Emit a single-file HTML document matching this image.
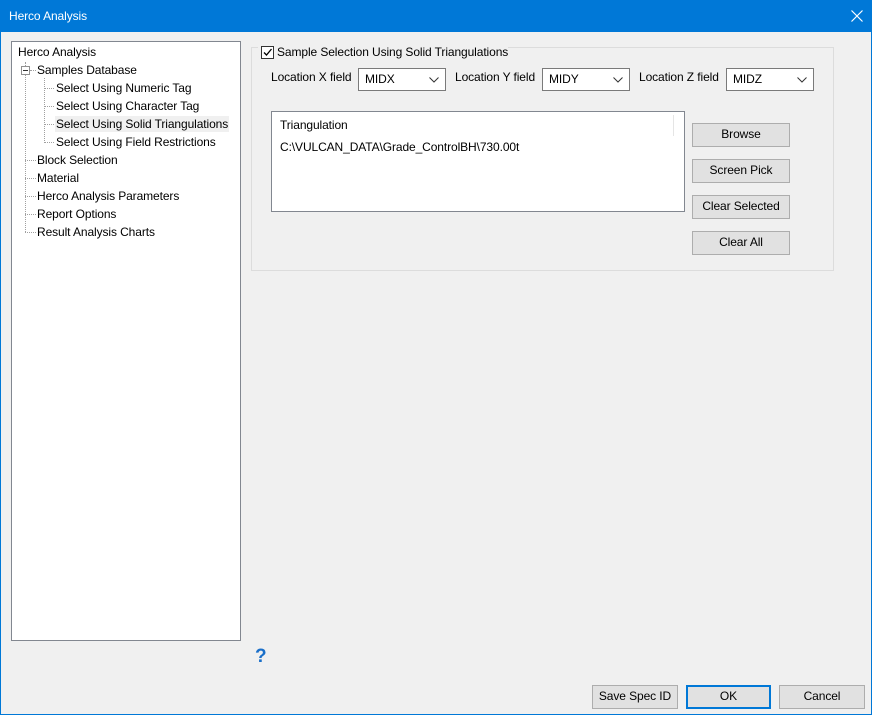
<!DOCTYPE html>
<html><head><style>
*{margin:0;padding:0;box-sizing:border-box}
body{width:872px;height:715px;background:#f0f0f0;font:12px "Liberation Sans",sans-serif;color:#000;position:relative;overflow:hidden;border:1px solid #0078d7;letter-spacing:-0.1px}
.a{position:absolute;white-space:nowrap}
.title{left:0;top:0;width:870px;height:31px;background:#0078d7;color:#fff;font-size:12px;line-height:31px;padding-left:8px}
.tree{left:10px;top:40px;width:230px;height:600px;background:#fff;border:1px solid #828790}
.ti{position:absolute;line-height:16px}
.dv{position:absolute;border-left:1px dotted #a0a0a0;width:0}
.dh{position:absolute;border-top:1px dotted #a0a0a0;height:0}
.cb{background:#fff;border:1px solid #7a7a7a;height:23px;width:88px;padding:3px 6px;line-height:14px}
.cb svg{position:absolute;right:6px;top:8px}
.btn{background:#e1e1e1;border:1px solid #adadad;height:24px;text-align:center;line-height:21px}
</style></head><body>
<div class="a title">Herco Analysis</div>
<svg class="a" style="left:850px;top:9px" width="12" height="12"><path d="M0.5 0.5L11.5 11.5M11.5 0.5L0.5 11.5" stroke="#fff" stroke-width="1.2"/></svg>
<div class="a tree">
 <div class="ti" style="left:6px;top:2px">Herco Analysis</div>
 <div class="dv" style="left:13px;top:20px;height:170px"></div>
 <div class="a" style="left:9px;top:24px;width:9px;height:9px;border:1px solid #919191;background:#fff"></div>
 <div class="a" style="left:11px;top:28px;width:5px;height:1px;background:#333"></div>
 <div class="dh" style="left:18px;top:28px;width:6px"></div>
 <div class="ti" style="left:25px;top:20px">Samples Database</div>
 <div class="dv" style="left:32px;top:36px;height:63px"></div>
 <div class="dh" style="left:32px;top:46px;width:10px"></div>
 <div class="dh" style="left:32px;top:64px;width:10px"></div>
 <div class="dh" style="left:32px;top:82px;width:10px"></div>
 <div class="dh" style="left:32px;top:100px;width:10px"></div>
 <div class="ti" style="left:44px;top:38px">Select Using Numeric Tag</div>
 <div class="ti" style="left:44px;top:56px">Select Using Character Tag</div>
 <div class="ti" style="left:43px;top:74px;background:#f0f0f0;padding:0 1px">Select Using Solid Triangulations</div>
 <div class="ti" style="left:44px;top:92px">Select Using Field Restrictions</div>
 <div class="dh" style="left:13px;top:118px;width:11px"></div>
 <div class="dh" style="left:13px;top:136px;width:11px"></div>
 <div class="dh" style="left:13px;top:154px;width:11px"></div>
 <div class="dh" style="left:13px;top:172px;width:11px"></div>
 <div class="dh" style="left:13px;top:190px;width:11px"></div>
 <div class="ti" style="left:25px;top:110px">Block Selection</div>
 <div class="ti" style="left:25px;top:128px">Material</div>
 <div class="ti" style="left:25px;top:146px">Herco Analysis Parameters</div>
 <div class="ti" style="left:25px;top:164px">Report Options</div>
 <div class="ti" style="left:25px;top:182px">Result Analysis Charts</div>
</div>
<div class="a" style="left:250px;top:46px;width:583px;height:224px;border:1px solid #dcdcdc"></div>
<div class="a" style="left:257px;top:43px;width:250px;height:16px;background:#f0f0f0"></div>
<div class="a" style="left:260px;top:45px;width:13px;height:13px;border:1px solid #333;background:#fff"></div>
<svg class="a" style="left:261px;top:46px" width="11" height="11"><path d="M2 5.5L4.5 8L9.5 2" stroke="#000" stroke-width="1.3" fill="none"/></svg>
<div class="a" style="left:276px;top:43px;line-height:16px">Sample Selection Using Solid Triangulations</div>
<div class="a" style="left:270px;top:69px">Location X field</div>
<div class="a cb" style="left:357px;top:67px">MIDX<svg width="10" height="6"><path d="M0.5 0.5L5 5L9.5 0.5" stroke="#333" fill="none"/></svg></div>
<div class="a" style="left:454px;top:69px">Location Y field</div>
<div class="a cb" style="left:541px;top:67px">MIDY<svg width="10" height="6"><path d="M0.5 0.5L5 5L9.5 0.5" stroke="#333" fill="none"/></svg></div>
<div class="a" style="left:638px;top:69px">Location Z field</div>
<div class="a cb" style="left:725px;top:67px">MIDZ<svg width="10" height="6"><path d="M0.5 0.5L5 5L9.5 0.5" stroke="#333" fill="none"/></svg></div>
<div class="a" style="left:270px;top:110px;width:414px;height:101px;background:#fff;border:1px solid #828790">
 <div class="a" style="left:8px;top:6px">Triangulation</div>
 <div class="a" style="left:401px;top:3px;width:1px;height:21px;background:#e5e5e5"></div>
 <div class="a" style="left:8px;top:28px">C:\VULCAN_DATA\Grade_ControlBH\730.00t</div>
</div>
<div class="a btn" style="left:691px;top:122px;width:98px">Browse</div>
<div class="a btn" style="left:691px;top:158px;width:98px">Screen Pick</div>
<div class="a btn" style="left:691px;top:194px;width:98px">Clear Selected</div>
<div class="a btn" style="left:691px;top:230px;width:98px">Clear All</div>
<div class="a" style="left:254px;top:645px;color:#1a6fc9;font-weight:bold;font-size:19px">?</div>
<div class="a btn" style="left:591px;top:684px;width:86px">Save Spec ID</div>
<div class="a btn" style="left:685px;top:684px;width:85px;border:2px solid #0078d7;line-height:19px">OK</div>
<div class="a btn" style="left:778px;top:684px;width:86px">Cancel</div>
</body></html>
